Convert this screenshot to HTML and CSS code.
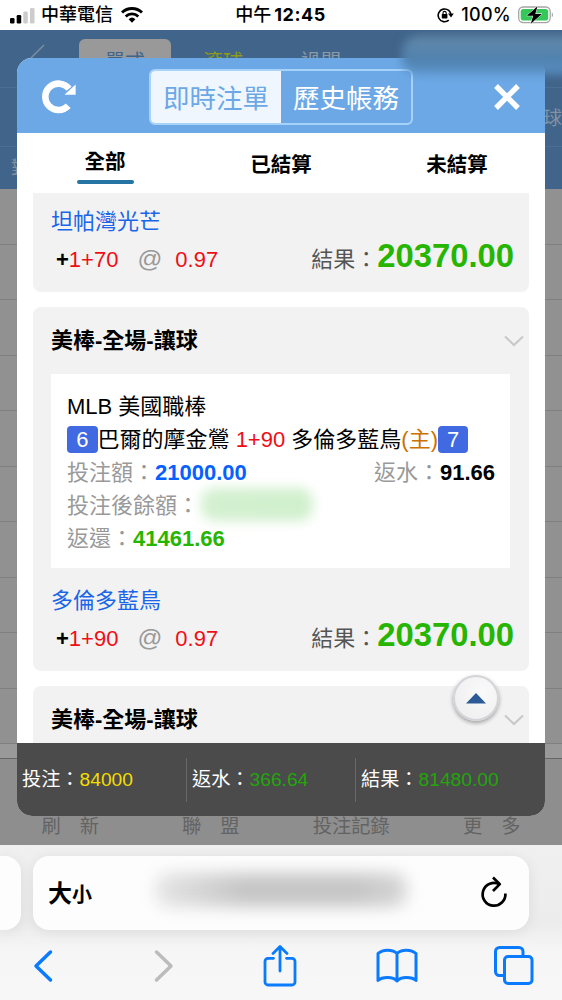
FILE: index.html
```html
<!DOCTYPE html>
<html lang="zh-Hant">
<head>
    <meta charset="UTF-8">
    <meta name="viewport" content="width=device-width, initial-scale=1.0">
    <title>即時注單</title>
    <link rel="stylesheet" href="styles.css">
</head>
<body>
    <div class="status-bar">
        <div class="status-left">
            <svg class="signal" width="25" height="17" viewBox="0 0 25 17">
                <rect x="0" y="11" width="4.5" height="5.5" rx="1.3" fill="#000"/>
                <rect x="6.7" y="8" width="4.5" height="8.5" rx="1.3" fill="#000"/>
                <rect x="13.3" y="4.5" width="4.5" height="12" rx="1.3" fill="#ccc"/>
                <rect x="20" y="1" width="4.5" height="15.5" rx="1.3" fill="#ccc"/>
            </svg>
            <span class="carrier">中華電信</span>
            <svg class="wifi" width="22" height="16" viewBox="0 0 22 16" fill="none" stroke="#000" stroke-width="2.8">
                <path d="M1 5.6a14.3 14.3 0 0 1 20 0"/>
                <path d="M4.7 9.5a9 9 0 0 1 12.6 0"/>
                <path d="M7.6 12.2a5 5 0 0 1 6.8 0L11 15.8z" fill="#000" stroke="none"/>
            </svg>
        </div>
        <div class="status-time"><span>中午</span>12:45</div>
        <div class="status-right">
            <svg class="lock" width="17" height="16" viewBox="0 0 17 16" fill="none" stroke="#000" stroke-width="1.6">
                <path d="M11.8 13.2A6.4 6.4 0 1 1 14 8.6"/>
                <path d="M11 6.6h5.8L14 10.4z" fill="#000" stroke="none"/>
                <rect x="4.8" y="7" width="5.6" height="4.4" rx=".6" fill="#000" stroke="none"/>
                <path d="M6 7.5V6a1.6 1.6 0 0 1 3.2 0v1.5" stroke-width="1.1"/>
            </svg>
            <span class="percent">100%</span>
            <svg class="battery" width="36" height="20" viewBox="0 0 36 20">
                <rect x=".7" y="2" width="31.5" height="15.6" rx="4.5" fill="#fff" stroke="#a5a5a5" stroke-width="1.3"/>
                <rect x="2.7" y="4" width="27.5" height="11.6" rx="2.8" fill="#35c759"/>
                <path d="M33.8 7.5c1.6.7 1.6 4 0 4.7z" fill="#a5a5a5"/>
                <path d="M19.5 1.2L8.8 10.7h6.4l-2.4 8L23.8 8.9h-6.5z" fill="#000" stroke="#fff" stroke-width="1" paint-order="stroke"/>
            </svg>
        </div>
    </div>

    <div class="web-view">
        <!-- dimmed page behind the dialog -->
        <div class="page">
            <div class="page-top">
                <svg class="page-back" width="20" height="28" viewBox="0 0 20 28" fill="none" stroke="#7e8f9f" stroke-width="1.4"><path d="M18 1L3 16l15 11"/></svg>
                <span class="page-tab active">單式</span>
                <span class="page-tab live">滾球</span>
                <span class="page-tab">過關</span>
            </div>
            <div class="page-sub">球</div>
            <div class="page-head">對</div>
            <div class="page-rows">
                <div></div><div></div><div></div><div></div><div></div>
                <div></div><div></div><div></div><div></div><div></div>
            </div>
            <div class="page-gap"></div>
            <div class="page-nav">
                <span>刷<i></i>新</span>
                <span>聯<i></i>盟</span>
                <span>投注記錄</span>
                <span>更<i></i>多</span>
            </div>
        </div>

        <div class="modal">
            <div class="modal-header">
                <svg class="refresh" width="36" height="36" viewBox="0 0 36 36">
                    <path d="M27.2 26.8A13.2 13.2 0 1 1 28 9.8" fill="none" stroke="#fff" stroke-width="6.6"/>
                    <path d="M34.6 5.500V15.800H23.500z" fill="#fff"/>
                </svg>
                <div class="segment">
                    <span class="segment-item on">即時注單</span>
                    <span class="segment-item">歷史帳務</span>
                </div>
                <svg class="close" width="28" height="28" viewBox="0 0 28 28" stroke="#fff" stroke-width="5.4"><path d="M3 3l22 22M25 3L3 25"/></svg>
            </div>

            <div class="tabs">
                <div class="tab current"><span>全部</span></div>
                <div class="tab"><span>已結算</span></div>
                <div class="tab"><span>未結算</span></div>
            </div>

            <div class="bet-list">
                <div class="card first">
                    <div class="pick">坦帕灣光芒</div>
                    <div class="odds">
                        <b>+</b><span class="red">1+70</span><span class="at">@</span><span class="red">0.97</span>
                        <span class="result">結果：<strong>20370.00</strong></span>
                    </div>
                </div>

                <div class="card">
                    <div class="card-title">
                        美棒-全場-讓球
                        <svg width="20" height="12" viewBox="0 0 20 12" fill="none" stroke="#c8c8c8" stroke-width="2"><path d="M1 1.5l9 8.5 9-8.5"/></svg>
                    </div>
                    <div class="detail">
                        <div>MLB 美國職棒</div>
                        <div class="teams"><span class="score">6</span>巴爾的摩金鶯 <span class="red">1+90</span> 多倫多藍鳥<span class="home">(主)</span><span class="score">7</span></div>
                        <div class="line">
                            <span>投注額：<b class="blue">21000.00</b></span>
                            <span>返水：<b class="black">91.66</b></span>
                        </div>
                        <div class="line"><span>投注後餘額：</span><span class="masked"></span></div>
                        <div class="line"><span>返還：<b class="green">41461.66</b></span></div>
                    </div>
                    <div class="pick">多倫多藍鳥</div>
                    <div class="odds">
                        <b>+</b><span class="red">1+90</span><span class="at">@</span><span class="red">0.97</span>
                        <span class="result">結果：<strong>20370.00</strong></span>
                    </div>
                </div>

                <div class="card">
                    <div class="card-title">
                        美棒-全場-讓球
                        <svg width="20" height="12" viewBox="0 0 20 12" fill="none" stroke="#c8c8c8" stroke-width="2"><path d="M1 1.5l9 8.5 9-8.5"/></svg>
                    </div>
                </div>
            </div>

            <div class="totals">
                <div>投注：<span class="yellow">84000</span></div>
                <div>返水：<span class="green">366.64</span></div>
                <div>結果：<span class="green">81480.00</span></div>
            </div>

            <div class="to-top">
                <svg width="20" height="11" viewBox="0 0 20 11"><path d="M10 0l10 10.5H0z" fill="#2c5a96"/></svg>
            </div>
        </div>
        <div class="account-mask"></div>
    </div>

    <div class="browser-bar">
        <div class="address-row">
            <div class="address prev"></div>
            <div class="address">
                <span class="text-size">大<small>小</small></span>
                <span class="url-mask"></span>
                <svg width="28" height="32" viewBox="0 0 28 32" fill="none" stroke="#000" stroke-width="2.7" stroke-linejoin="round">
                    <path d="M25.4 17.5A11.4 11.4 0 1 1 19.5 8.3"/>
                    <path d="M13 1.5l6.8 6.6-6.800 6.900"/>
                </svg>
            </div>
        </div>
        <div class="toolbar">
            <svg width="20" height="34" viewBox="0 0 20 34" fill="none" stroke="#0a7aff" stroke-width="3.5" stroke-linecap="round" stroke-linejoin="round"><path d="M17.5 3L3 17l14.5 14"/></svg>
            <svg width="20" height="34" viewBox="0 0 20 34" fill="none" stroke="#bcbcbe" stroke-width="3.5" stroke-linecap="round" stroke-linejoin="round"><path d="M2.5 3L17 17 2.5 31"/></svg>
            <svg width="34" height="42" viewBox="0 0 34 42" fill="none" stroke="#0a7aff" stroke-width="2.8" stroke-linecap="round" stroke-linejoin="round">
                <path d="M10.5 13.3H5a3 3 0 0 0-3 3V37a3 3 0 0 0 3 3h24a3 3 0 0 0 3-3V16.3a3 3 0 0 0-3-3h-5.5"/>
                <path d="M17 26V2M10 8.5L17 1.5l7 7"/>
            </svg>
            <svg width="42" height="36" viewBox="0 0 42 36" fill="none" stroke="#0a7aff" stroke-width="3" stroke-linecap="round" stroke-linejoin="round">
                <path d="M21 5.5C17 1 6.5 1 2 5.5V32.5C6.5 28.5 17 28.5 21 33c4-4.5 14.5-4.5 19-.5V5.5C35.5 1 25 1 21 5.5zM21 5.5V33"/>
            </svg>
            <svg width="40" height="40" viewBox="0 0 40 40" fill="none" stroke="#0a7aff" stroke-width="3" stroke-linejoin="round">
                <path d="M10 29.5H5.5a4 4 0 0 1-4-4V5.5a4 4 0 0 1 4-4h19.5a4 4 0 0 1 4 4V10"/>
                <rect x="10.5" y="10.5" width="27.5" height="27" rx="3.5"/>
            </svg>
        </div>
    </div>
</body>
</html>
```
FILE: styles.css
```css
* {
    margin: 0;
    padding: 0;
    box-sizing: border-box;
}

body {
    width: 562px;
    height: 1000px;
    display: flex;
    flex-direction: column;
    overflow: hidden;
    font-family: "Liberation Sans", "Noto Sans CJK TC", sans-serif;
    font-size: 22px;
    color: #000;
    background: #fff;
}

svg {
    display: block;
    flex: none;
}

/* Phone status bar */
.status-bar {
    height: 30px;
    flex: none;
    display: grid;
    grid-template-columns: 1fr auto 1fr;
    align-items: center;
    padding: 0 8px 0 10px;
    font-family: Inter, "Noto Sans CJK TC", sans-serif;
    font-size: 18px;
    line-height: 30px;
}

.status-left,
.status-right {
    display: flex;
    align-items: center;
}

.status-right {
    justify-content: flex-end;
}

.carrier {
    font-weight: 500;
    margin: 0 8px 0 6px;
}

.status-time {
    font-weight: 700;
    letter-spacing: 0.5px;
    margin-right: 3px;
}

.status-time span {
    font-weight: 500;
    letter-spacing: 0;
    margin-right: 3px;
}

.percent {
    font-weight: 500;
    letter-spacing: 0.3px;
    margin: 0 7px;
}

/* Page behind the dialog */
.web-view {
    position: relative;
    height: 815px;
    flex: none;
    overflow: hidden;
    background: #919191;
}

.page {
    display: flex;
    flex-direction: column;
    height: 100%;
}

.page-top {
    height: 58px;
    display: flex;
    align-items: flex-start;
    padding: 9px 0 0 26px;
    background: #40648a;
    border-bottom: 1px solid #4b6f94;
}

.page-back {
    margin: 5px 33px 0 0;
}

.page-tab {
    width: 92px;
    height: 38px;
    margin-right: 6px;
    text-align: center;
    font-size: 20px;
    line-height: 46px;
    color: #8c9aa7;
}

.page-tab.active {
    color: #40648a;
    background: #999;
    border-radius: 6px;
}

.page-tab.live {
    color: #8f9b16;
}

.page-sub {
    height: 59px;
    line-height: 62px;
    padding-left: 543px;
    color: #8292a1;
    font-size: 19px;
    background: #40648a;
    border-bottom: 1px solid #4b6f94;
    white-space: nowrap;
}

.page-head {
    height: 42px;
    line-height: 42px;
    padding-left: 11px;
    font-size: 18px;
    color: #8292a1;
    background: #40648a;
}

.page-rows div {
    height: 55.5px;
    border-bottom: 1px solid #7f7f7f;
}

.page-gap {
    height: 15px;
    background: #999;
    border-bottom: 1px solid #666;
}

.page-nav {
    flex: 1;
    display: grid;
    grid-template-columns: repeat(4, 1fr);
    align-items: end;
    padding-bottom: 6px;
    background: #8e8e8e;
    color: #636363;
    font-size: 19.3px;
    text-align: center;
}

.page-nav i {
    display: inline-block;
    width: 19px;
}

/* Dialog */
.modal {
    position: absolute;
    top: 28px;
    left: 17px;
    width: 528px;
    height: 758px;
    display: flex;
    flex-direction: column;
    overflow: hidden;
    border-radius: 15px;
    background: #fff;
}

.modal-header {
    height: 75px;
    flex: none;
    display: flex;
    align-items: center;
    padding: 2px 24px 0 24px;
    background: #6ca8e5;
}

.segment {
    display: flex;
    width: 264px;
    height: 56px;
    margin-left: 72px;
    border: 2px solid #a7d3fb;
    border-radius: 6px;
    overflow: hidden;
}

.segment-item {
    flex: 1;
    text-align: center;
    line-height: 56px;
    font-size: 26.5px;
    color: #fff;
}

.segment-item.on {
    color: #6ca8e5;
    background: #eff6fe;
}

.close {
    margin-left: auto;
}

.tabs {
    height: 60px;
    flex: none;
    display: grid;
    grid-template-columns: repeat(3, 1fr);
    text-align: center;
    font-size: 20.5px;
    font-weight: 700;
    line-height: 63px;
}

.tab.current span {
    display: block;
    width: 57px;
    height: 47px;
    line-height: 57px;
    margin: 0 auto;
}

.tab.current::after {
    content: "";
    display: block;
    width: 57px;
    height: 4px;
    margin: 0 auto;
    border-radius: 2px;
    background: #2674a4;
}

.bet-list {
    height: 550px;
    flex: none;
    display: flex;
    flex-direction: column;
    gap: 15px;
    padding: 0 16px;
    overflow: hidden;
}

.card {
    flex: none;
    padding: 0 15px 15px 18px;
    background: #f2f2f2;
    border-radius: 8px;
}

.card.first {
    padding-top: 12px;
    border-radius: 0 0 8px 8px;
}

.card-title {
    height: 67px;
    line-height: 60px;
    margin-right: -10px;
    display: flex;
    align-items: center;
    justify-content: space-between;
    font-weight: 700;
}

.detail {
    height: 194px;
    margin: 0 4px 16px 0;
    padding: 16px 15px 0 16px;
    line-height: 33px;
    white-space: nowrap;
    background: #fff;
}

.detail > div {
    height: 33px;
}

.score {
    display: inline-block;
    width: 30.5px;
    height: 27px;
    line-height: 27px;
    text-align: center;
    color: #fff;
    background: #4169e1;
    border-radius: 4px;
}

.line {
    display: flex;
    justify-content: space-between;
    color: #999;
}

.masked {
    flex: none;
    width: 112px;
    height: 33px;
    margin: -1px auto 0 2px;
    border-radius: 14px;
    background: linear-gradient(90deg, #d3f0d0, #d0f0cc);
    filter: blur(6px);
}

.pick {
    height: 33px;
    line-height: 34px;
    color: #1a66e8;
}

.odds {
    height: 39px;
    display: flex;
    align-items: baseline;
    padding-left: 5px;
    line-height: 36px;
}

.at {
    margin: 0 13px 0 19px;
    font-size: 24.5px;
    color: #999;
}

.result {
    margin-left: auto;
    color: #555;
}

.result strong {
    font-size: 32.8px;
    color: #26b500;
}

.red { color: #f00d16; }
.blue { color: #0560ff; }
.black { color: #000; }
.green { color: #26b500; }
.home { color: #cc7000; }
.yellow { color: #f4dc00; }

.totals {
    flex: 1;
    display: grid;
    grid-template-columns: 169px 169px 1fr;
    align-items: center;
    font-size: 19.2px;
    color: #fff;
    background: #4b4b4b;
}

.totals div {
    height: 44px;
    line-height: 44px;
    padding-left: 5px;
}

.totals div + div {
    border-left: 1px solid #686868;
}

.totals .green {
    color: #22a50c;
}

.to-top {
    position: absolute;
    left: 436px;
    top: 617px;
    width: 46px;
    height: 46px;
    display: flex;
    align-items: center;
    justify-content: center;
    border: 2px solid #d4d4d8;
    border-radius: 50%;
    background: radial-gradient(circle at 65% 35%, #fafafa, #ececee);
    box-shadow: 0 2px 4px rgba(0, 0, 0, 0.35);
}

.account-mask {
    position: absolute;
    top: 6px;
    left: 402px;
    width: 180px;
    height: 38px;
    border-radius: 16px;
    background: linear-gradient(#6489a8, #4f81ae 60%, #5b92c8);
    filter: blur(5px);
}

/* Browser chrome */
.browser-bar {
    flex: 1;
    padding-top: 11px;
    background: linear-gradient(#f0f0f0, #ececec 50%, #f6f6f6 68%, #f7f7f7);
}

.address-row {
    display: flex;
    gap: 12px;
    height: 74px;
}

.address {
    width: 496px;
    flex: none;
    display: flex;
    align-items: center;
    padding: 0 21px 3px 15px;
    border-radius: 16px;
    background: #fdfdfd;
    box-shadow: 0 2px 14px rgba(0, 0, 0, 0.08);
}

.address.prev {
    width: 21px;
    padding: 0;
    border-radius: 0 16px 16px 0;
}

.text-size {
    font-size: 24px;
    font-weight: 700;
}

.text-size small {
    font-size: 20px;
}

.url-mask {
    width: 252px;
    height: 34px;
    margin: 0 auto 3px 63px;
    border-radius: 14px;
    background: linear-gradient(90deg, #e6e6e6, #c6c6c6 35%, #c6c6c6 80%, #d6d6d6);
    filter: blur(8px);
}

.toolbar {
    height: 72px;
    display: grid;
    grid-template-columns: 86px 156px 75px 160px 74px;
    align-items: center;
    justify-items: center;
}
```
